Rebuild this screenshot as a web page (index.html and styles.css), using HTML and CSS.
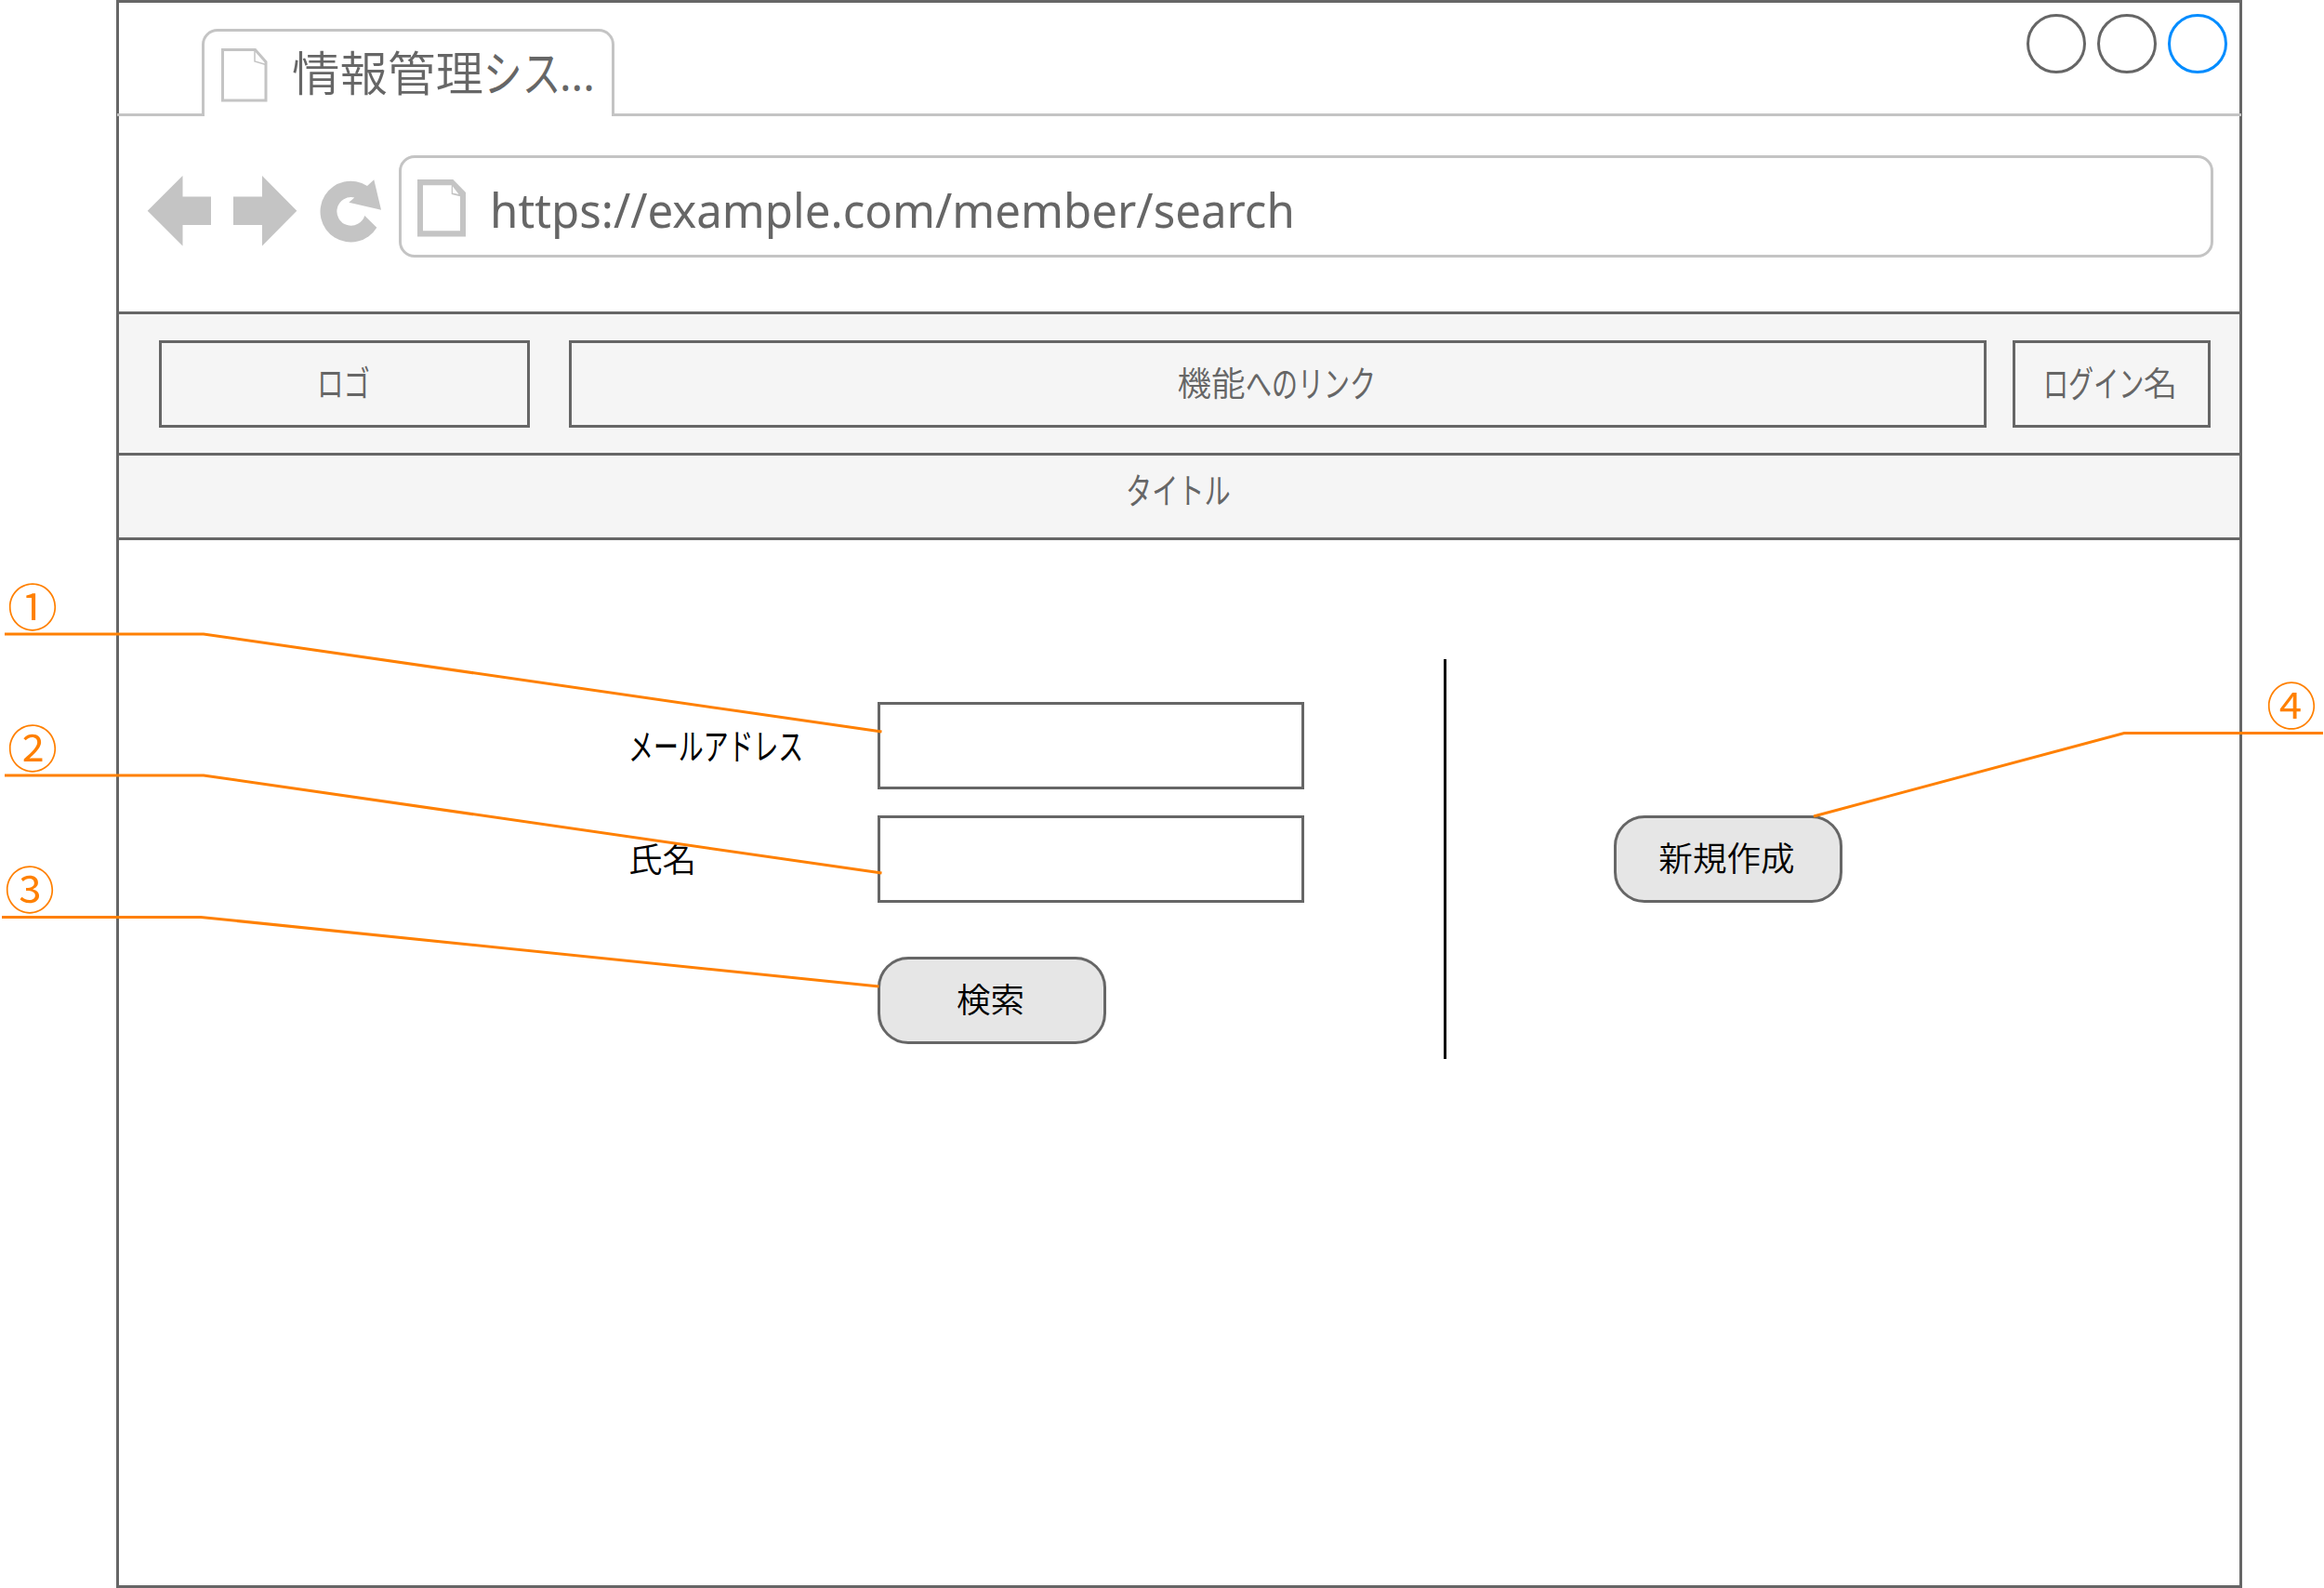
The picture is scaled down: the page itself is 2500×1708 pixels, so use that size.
FILE: index.html
```html
<!DOCTYPE html>
<html lang="ja">
<head>
<meta charset="utf-8">
<title>情報管理システム</title>
<link rel="stylesheet" href="styles.css">
</head>
<body>
<main class="window">
  <div class="tabs">
    <div class="strip strip-left"></div>
    <div class="tab">
      <svg class="tab-icon" width="50" height="58" viewBox="0 0 50 58"><path d="M1.500 1.500H36.500L48 14.500V56H1.500Z"/><path class="fold" d="M36 2V14L48 17.500"/></svg>
      <span class="tab-title">情報管理<span class="kana kana-tab">シス</span><span class="dots">...</span></span>
    </div>
    <div class="strip strip-right">
      <i class="dot"></i><i class="dot"></i><i class="dot dot-active"></i>
    </div>
  </div>
  <div class="toolbar">
    <svg class="nav-icons" width="254" height="78" viewBox="157 188 254 78">
      <path d="M158.700 226.700L196.500 189V211.500H227V242H196.500V264.500Z"/>
      <path d="M319.300 226.700L282 189V211.500H251V242H282V264.500Z"/>
      <path d="M395 200L402.300 193.300L410 225.700L375.300 217.700L381.300 212.500A15.300 15.300 0 1 0 392.300 232L405.300 244.700A32.800 32.800 0 1 1 395 200Z"/>
    </svg>
    <div class="address">
      <svg class="page-icon" width="52" height="62" viewBox="0 0 52 62"><path fill-rule="evenodd" d="M0 0H38.300L52 14V61.500H0ZM6 6.300V55.300H46V18.300L36.700 16V6.300Z"/><path class="corner" d="M38 7.500L44.500 16L38 14.500Z"/></svg>
      <span class="url">https://example.com/member/search</span>
    </div>
  </div>
  <header class="header">
    <div class="box logo"><span class="kana kana-logo">ロゴ</span></div>
    <div class="box links">機能<span class="kana kana-links">へのリンク</span></div>
    <div class="box login"><span class="kana kana-login">ログイン</span>名</div>
  </header>
  <div class="title"><span class="kana kana-title">タイトル</span></div>
  <div class="content">
    <form class="form">
      <label for="mail"><span class="kana kana-mail">メールアドレス</span></label>
      <input id="mail" type="text">
      <label for="name">氏名</label>
      <input id="name" type="text">
      <button class="button search" type="button">検索</button>
    </form>
    <div class="divider"></div>
    <button class="button create" type="button">新規作成</button>
  </div>
</main>
<svg class="callouts" width="2500" height="1708" viewBox="0 0 2500 1708">
  <polyline points="5,682 219,682 948.500,787"/>
  <polyline points="5,834 219,834 948.500,939"/>
  <polyline points="2,986.500 216,986.500 945.500,1061"/>
  <polyline points="2499,788.500 2285,788.500 1951,878"/>
  <text x="35" y="673.500">①</text>
  <text x="35" y="825.500">②</text>
  <text x="32" y="977.500">③</text>
  <text x="2465" y="779.500">④</text>
</svg>
</body>
</html>
```
FILE: styles.css
```css
* { box-sizing: border-box; }

body {
  margin: 0;
  width: 2500px;
  height: 1708px;
  position: relative;
  overflow: hidden;
  background: #fff;
  color: #666;
  font-family: "Noto Sans CJK JP", sans-serif;
  font-size: 36.6px;
  font-weight: 350;
  line-height: 1;
}

.window {
  width: 2287px;
  height: 1708px;
  margin-left: 125px;
  border: 3px solid #666;
}

.tabs {
  display: flex;
  align-items: flex-end;
  height: 122px;
  margin: 0 -2px;
}

.strip { border-bottom: 3px solid #c4c4c4; }
.strip-left { width: 92px; }

.tab {
  display: flex;
  width: 444px;
  height: 94px;
  margin: 0 -1px;
  padding: 18px 0 0 18px;
  border: 3px solid #c4c4c4;
  border-bottom: 0;
  border-radius: 17px 17px 0 0;
}

.tab-icon { flex: none; fill: none; stroke: #c4c4c4; stroke-width: 3; }
.tab-icon .fold { stroke-width: 1.500; }

.tab-title {
  margin: -2px 0 0 26px;
  font-size: 51.500px;
  white-space: nowrap;
}

.dots { font-family: "Noto Sans", sans-serif; font-weight: 400; font-size: 47px; }

.strip-right {
  flex: 1;
  display: flex;
  justify-content: flex-end;
  gap: 12px;
  height: 122px;
  padding: 12px 15px 0 0;
}

.dot {
  width: 64px;
  height: 64px;
  border: 3px solid #666;
  border-radius: 50%;
}

.dot-active { border-color: #008cff; }

.toolbar {
  display: flex;
  height: 210px;
  padding: 42px 28px 0 29px;
}

.nav-icons { margin-top: 21px; fill: #c4c4c4; }

.address {
  display: flex;
  width: 1952px;
  height: 110px;
  margin-left: 18px;
  padding: 23px 0 0 17px;
  border: 3px solid #c4c4c4;
  border-radius: 17px;
}

.page-icon { fill: #c4c4c4; }
.page-icon .corner { fill: #fff; }

.url {
  width: 870px;
  margin: 2px 0 0 26px;
  font: 400 51.500px/60px "Noto Sans", sans-serif;
  white-space: nowrap;
  transform: scaleX(.955);
  transform-origin: 0 50%;
}

.kana {
  display: inline-block;
  font-weight: 400;
  white-space: nowrap;
  transform-origin: 0 55%;
}

.kana-tab { width: 82px; transform: scale(.81, 1.03); }
.kana-logo { width: 57px; transform: scale(.78, 1.03); }
.kana-links { width: 140px; transform: scale(.765, 1.05); }
.kana-login { width: 108px; transform: scale(.74, 1.05); }
.kana-title { width: 113px; transform: scale(.77, 1.05); }
.kana-mail { width: 187px; transform: scale(.735, 1.07); }

.header {
  display: flex;
  height: 155px;
  padding: 28px 31px 0 43px;
  border: solid #666;
  border-width: 3px 0;
  background: #f5f5f5;
}

.box {
  display: flex;
  align-items: center;
  justify-content: center;
  height: 94px;
  padding: 0 3px 4px 0;
  border: 3px solid #666;
}

.logo { width: 399px; }
.links { width: 1525px; margin-left: 42px; }
.login { width: 213px; margin-left: 28px; }

.title {
  display: flex;
  justify-content: center;
  height: 91px;
  padding: 19px 3px 0 0;
  border-bottom: 3px solid #666;
  background: #f5f5f5;
}

.content {
  display: flex;
  align-items: flex-start;
  padding: 128px 0 0 548px;
  color: #000;
}

.form {
  display: grid;
  grid-template-columns: 268px 459px;
  grid-template-rows: 94px 94px 94px;
  row-gap: 28px;
  align-items: center;
  margin-top: 46px;
}

.form label { padding-bottom: 2px; }

.form input {
  width: 459px;
  height: 94px;
  border: 3px solid #666;
  background: #fff;
}

.button {
  height: 94px;
  padding: 0 3px 3px 0;
  border: 3px solid #666;
  border-radius: 33px;
  background: #e6e6e6;
  color: #000;
  font: inherit;
}

.search {
  grid-column: 2;
  width: 246px;
  margin-top: 60px;
}

.divider {
  width: 3px;
  height: 430px;
  margin-left: 150px;
  background: #000;
}

.create {
  width: 246px;
  margin: 168px 0 0 180px;
}

.callouts {
  position: absolute;
  top: 0;
  left: 0;
  pointer-events: none;
}

.callouts polyline { fill: none; stroke: #ff8000; stroke-width: 3; }

.callouts text {
  fill: #ff8000;
  font-size: 54px;
  font-weight: 350;
  text-anchor: middle;
}
```
